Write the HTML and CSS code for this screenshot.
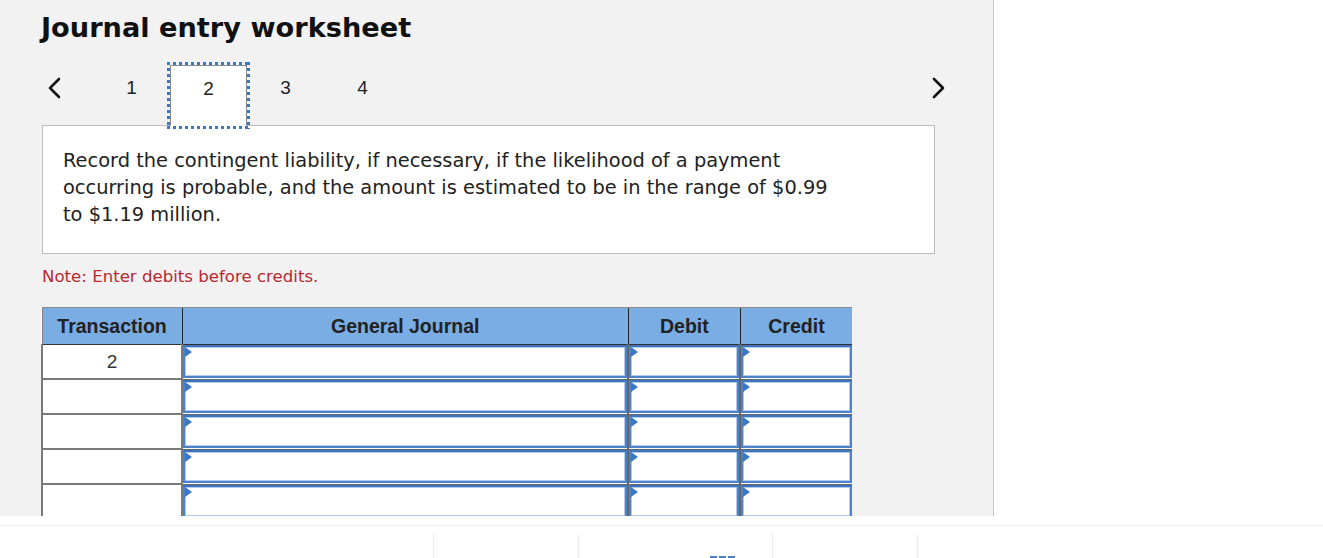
FILE: index.html
```html
<!DOCTYPE html>
<html>
<head>
<meta charset="utf-8">
<link rel="stylesheet" href="styles.css">
</head>
<body>
<div class="page">
  <div class="panel">
    <h1 class="title">Journal entry worksheet</h1>
    <div class="nav">
      <div class="chev chev-left">
        <svg width="14" height="22" viewBox="0 0 14 22"><polyline points="12,2 3,11 12,20" fill="none" stroke="#111" stroke-width="2.6" stroke-linecap="round" stroke-linejoin="round"/></svg>
      </div>
      <div class="tab">1</div>
      <div class="tab active">2</div>
      <div class="tab">3</div>
      <div class="tab">4</div>
      <div class="nav-spacer"></div>
      <div class="chev chev-right">
        <svg width="14" height="22" viewBox="0 0 14 22"><polyline points="2,2 11,11 2,20" fill="none" stroke="#111" stroke-width="2.6" stroke-linecap="round" stroke-linejoin="round"/></svg>
      </div>
    </div>
    <div class="question">Record the contingent liability, if necessary, if the likelihood of a payment occurring is probable, and the amount is estimated to be in the range of $0.99 to $1.19 million.</div>
    <div class="note">Note: Enter debits before credits.</div>
    <table class="journal">
      <thead>
        <tr>
          <th class="c-tx">Transaction</th>
          <th class="c-gj">General Journal</th>
          <th class="c-amt">Debit</th>
          <th class="c-amt">Credit</th>
        </tr>
      </thead>
      <tbody>
        <tr>
          <td class="tx">2</td>
          <td class="in"><div class="field"><span class="flag"></span></div></td>
          <td class="in"><div class="field"><span class="flag"></span></div></td>
          <td class="in"><div class="field"><span class="flag"></span></div></td>
        </tr>
        <tr>
          <td class="tx"></td>
          <td class="in"><div class="field"><span class="flag"></span></div></td>
          <td class="in"><div class="field"><span class="flag"></span></div></td>
          <td class="in"><div class="field"><span class="flag"></span></div></td>
        </tr>
        <tr>
          <td class="tx"></td>
          <td class="in"><div class="field"><span class="flag"></span></div></td>
          <td class="in"><div class="field"><span class="flag"></span></div></td>
          <td class="in"><div class="field"><span class="flag"></span></div></td>
        </tr>
        <tr>
          <td class="tx"></td>
          <td class="in"><div class="field"><span class="flag"></span></div></td>
          <td class="in"><div class="field"><span class="flag"></span></div></td>
          <td class="in"><div class="field"><span class="flag"></span></div></td>
        </tr>
        <tr>
          <td class="tx"></td>
          <td class="in"><div class="field"><span class="flag"></span></div></td>
          <td class="in"><div class="field"><span class="flag"></span></div></td>
          <td class="in"><div class="field"><span class="flag"></span></div></td>
        </tr>
      </tbody>
    </table>
  </div>
  <div class="footer">
    <div class="f-lead"></div>
    <div class="f-cell f-a"></div>
    <div class="f-cell f-b"><svg class="f-icon" width="26" height="3" viewBox="0 0 26 3"><rect x="0" y="0" width="7" height="3" fill="#4a7fc1"/><rect x="9" y="0" width="7" height="3" fill="#4a7fc1"/><rect x="18" y="0" width="7" height="3" fill="#4a7fc1"/></svg></div>
    <div class="f-cell f-c"></div>
    <div class="f-cell f-d"></div>
  </div>
</div>
</body>
</html>
```
FILE: styles.css
```css
html, body {
  margin: 0;
  padding: 0;
  background: #ffffff;
}
body {
  width: 1323px;
  height: 558px;
  overflow: hidden;
}
.page {
  display: flex;
  flex-direction: column;
}
.panel {
  box-sizing: border-box;
  width: 994px;
  height: 516px;
  background: #f2f2f2;
  border-right: 1px solid #c6c6c6;
  padding-left: 41px;
  overflow: hidden;
}
.title {
  margin: 0;
  padding-top: 12px;
  font-family: "DejaVu Sans", Verdana, sans-serif;
  font-weight: bold;
  font-size: 27.2px;
  line-height: 31px;
  color: #111;
}
.nav {
  margin-top: 22px;
  height: 60px;
  width: 921px;
  display: flex;
  align-items: flex-start;
}
.chev {
  width: 52px;
  height: 46px;
  display: flex;
  align-items: center;
  padding-left: 6px;
  box-sizing: border-box;
}
.chev-right {
  width: 30px;
  padding-left: 0;
}
.nav-spacer {
  flex: 1;
}
.tab {
  box-sizing: border-box;
  width: 77px;
  height: 61px;
  padding-top: 13px;
  text-align: center;
  font-family: "Liberation Sans", Arial, sans-serif;
  font-size: 19px;
  line-height: 20px;
  color: #222;
}
.tab.active {
  position: relative;
  z-index: 1;
  background: #ffffff;
  border: 1px solid #8a8a8a;
  border-bottom: none;
}
.tab.active::before {
  content: "";
  position: absolute;
  left: -4px;
  right: -4px;
  top: -4px;
  bottom: -3px;
  pointer-events: none;
  background:
    repeating-linear-gradient(90deg, #3b78c4 0 3px, transparent 3px 6px) top / 100% 3px no-repeat,
    repeating-linear-gradient(90deg, #3b78c4 0 3px, transparent 3px 6px) bottom / 100% 3px no-repeat,
    repeating-linear-gradient(180deg, #3b78c4 0 3px, transparent 3px 6px) left / 3px 100% no-repeat,
    repeating-linear-gradient(180deg, #3b78c4 0 3px, transparent 3px 6px) right / 3px 100% no-repeat;
}
.question {
  box-sizing: border-box;
  margin-left: 1px;
  width: 893px;
  height: 129px;
  background: #ffffff;
  border: 1px solid #bdbdbd;
  padding: 21px 90px 0 20px;
  font-family: "DejaVu Sans", Verdana, sans-serif;
  font-size: 19.4px;
  line-height: 27px;
  color: #222;
}
.note {
  margin-top: 12px;
  margin-left: 1px;
  font-family: "DejaVu Sans", Verdana, sans-serif;
  font-size: 16.6px;
  line-height: 21px;
  color: #b8292f;
}
.journal {
  margin-top: 20px;
  margin-left: 0;
  width: 811px;
  border-collapse: collapse;
  table-layout: fixed;
  background: #ffffff;
}
.journal th {
  height: 36px;
  padding: 0;
  background: #79ade4;
  border-top: 1px solid #8c8c8c;
  border-bottom: 1px solid #333;
  border-left: 1px solid #222;
  font-family: "Liberation Sans", Arial, sans-serif;
  font-weight: bold;
  font-size: 19.5px;
  color: #222;
  text-align: center;
}
.journal th.c-tx {
  width: 139px;
  border-left: 1px solid #808080;
}
.journal th.c-gj {
  width: 445px;
}
.journal th.c-amt {
  width: 111px;
}
.journal td {
  height: 33px;
  padding: 0;
}
.journal td.tx {
  border: 2px solid #7a7a7a;
  border-top-width: 1px;
  border-bottom-width: 2px;
  text-align: center;
  font-family: "Liberation Sans", Arial, sans-serif;
  font-size: 19px;
  color: #333;
}
.journal td.in {
  border-left: 2px solid #666;
  border-bottom: 1px solid #666;
  padding: 0;
  vertical-align: top;
}
.field {
  position: relative;
  box-sizing: border-box;
  height: 33px;
  margin: 0;
  border: 2px solid #4b82c9;
  border-top-color: #3d74bd;
  box-shadow: inset 0 0 0 1px #b2cbee;
  background: #ffffff;
}
.flag {
  position: absolute;
  left: 0;
  top: 0;
  width: 0;
  height: 0;
  border-top: 5px solid transparent;
  border-bottom: 5px solid transparent;
  border-left: 7px solid #3b78c4;
}
.footer {
  margin-top: 9px;
  border-top: 1px solid #ededed;
  padding-top: 8px;
  height: 24px;
  display: flex;
}
.f-lead {
  width: 433px;
}
.f-cell {
  box-sizing: border-box;
  border-left: 1px solid #ececec;
  height: 24px;
}
.f-a { width: 145px; }
.f-b { width: 194px; padding-left: 131px; padding-top: 22px; }
.f-c { width: 145px; }
.f-d { width: 10px; }
.f-icon { display: block; }
```
